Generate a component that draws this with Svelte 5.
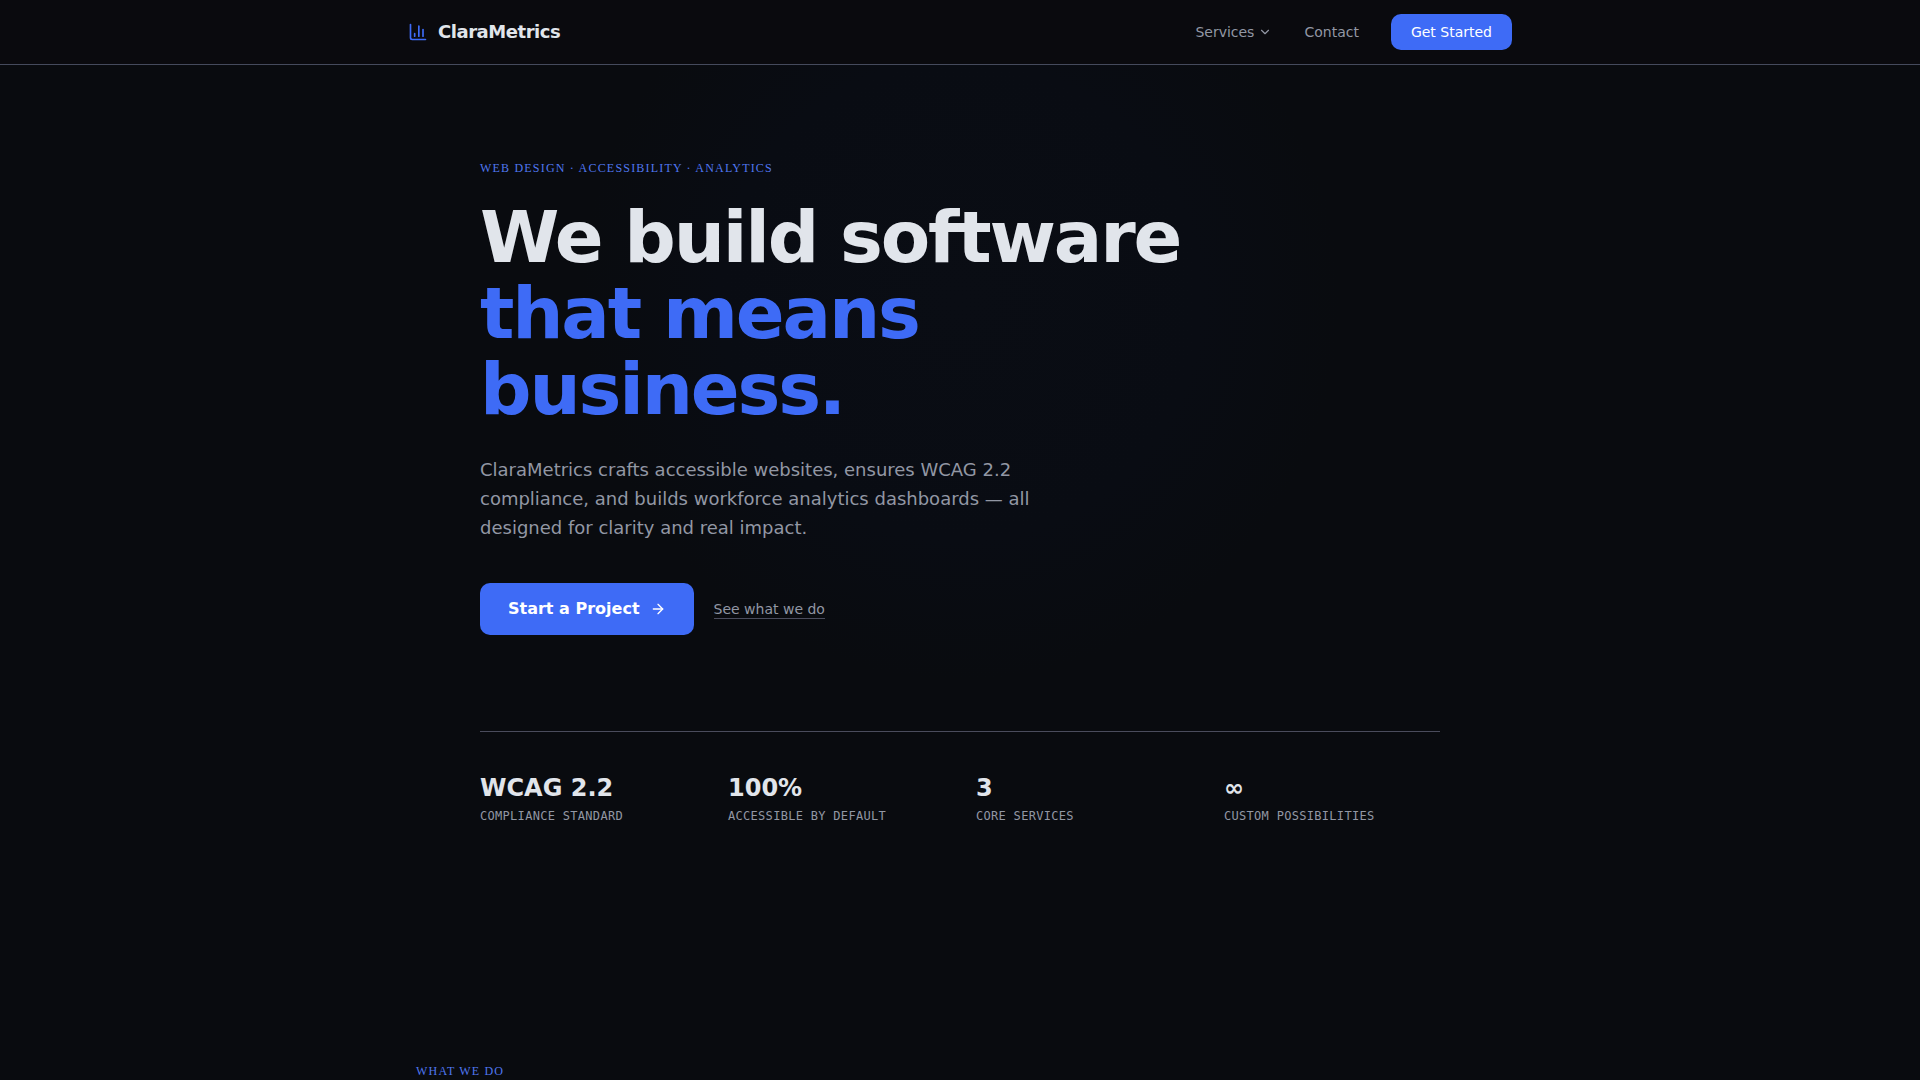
<script lang="ts">
	type Stat = {
		value: string;
		label: string;
	};

	const stats: Stat[] = [
		{ value: 'WCAG 2.2', label: 'Compliance Standard' },
		{ value: '100%', label: 'Accessible by Default' },
		{ value: '3', label: 'Core Services' },
		{ value: '∞', label: 'Custom Possibilities' }
	];
</script>

<header class="site-header">
	<div class="header-inner">
		<a href="/" class="brand">
			<svg class="brand-icon" viewBox="0 0 24 24" aria-hidden="true">
				<path d="M3 3v16a2 2 0 0 0 2 2h16" />
				<path d="M18 17V9" />
				<path d="M13 17V5" />
				<path d="M8 17v-3" />
			</svg>
			<span>ClaraMetrics</span>
		</a>
		<nav class="site-nav" aria-label="Main">
			<button type="button" class="nav-item" aria-haspopup="true">
				Services
				<svg class="chevron" viewBox="0 0 24 24" aria-hidden="true">
					<path d="m6 9 6 6 6-6" />
				</svg>
			</button>
			<a href="/contact" class="nav-item">Contact</a>
			<a href="/start" class="nav-cta">Get Started</a>
		</nav>
	</div>
</header>

<main>
	<section class="hero">
		<div class="hero-inner">
			<p class="eyebrow">Web Design · Accessibility · Analytics</p>
			<h1>
				We build software
				<span>that means business.</span>
			</h1>
			<p class="lead">
				ClaraMetrics crafts accessible websites, ensures WCAG 2.2 compliance, and builds workforce
				analytics dashboards — all designed for clarity and real impact.
			</p>
			<div class="actions">
				<a href="/start" class="primary">
					Start a Project
					<svg class="arrow" viewBox="0 0 24 24" aria-hidden="true">
						<path d="M5 12h14" />
						<path d="m12 5 7 7-7 7" />
					</svg>
				</a>
				<a href="#services" class="secondary">See what we do</a>
			</div>
			<dl class="stats">
				{#each stats as stat}
					<div class="stat">
						<dt>{stat.label}</dt>
						<dd>{stat.value}</dd>
					</div>
				{/each}
			</dl>
		</div>
	</section>

	<section class="services" id="services">
		<p class="eyebrow">What We Do</p>
	</section>
</main>

<style>
	:global(body) {
		background: #090b0f;
		color: #e1e5eb;
		font-family: 'DejaVu Sans', sans-serif;
		text-rendering: optimizeLegibility;
	}

	a {
		color: inherit;
		text-decoration: none;
	}

	svg {
		fill: none;
		stroke: currentColor;
		stroke-width: 2;
		stroke-linecap: round;
		stroke-linejoin: round;
	}

	.site-header {
		background: #0a0a0e;
		border-bottom: 1px solid #454a5c;
	}

	.header-inner {
		display: flex;
		align-items: center;
		justify-content: space-between;
		box-sizing: border-box;
		max-width: 1152px;
		height: 64px;
		margin: 0 auto;
		padding: 0 24px;
	}

	.brand {
		display: flex;
		align-items: center;
		gap: 10px;
		font-size: 18px;
		font-weight: 700;
		line-height: 28px;
		letter-spacing: -0.025em;
	}

	.brand-icon {
		width: 20px;
		height: 20px;
		color: #3e6bf6;
	}

	.site-nav {
		display: flex;
		align-items: center;
		gap: 32px;
		font-size: 14px;
		line-height: 20px;
	}

	.nav-item {
		display: flex;
		align-items: center;
		gap: 4px;
		padding: 0;
		border: 0;
		background: none;
		color: #9297a4;
		font: inherit;
		cursor: pointer;
	}

	.chevron {
		width: 14px;
		height: 14px;
	}

	.nav-cta {
		padding: 8px 20px;
		border-radius: 10px;
		background: #3e6bf6;
		color: #fff;
	}

	.hero {
		background: radial-gradient(
			circle at 50% 235px,
			#0a0d14 0,
			#090c13 240px,
			#090b0f 380px
		);
	}

	.hero-inner {
		box-sizing: border-box;
		max-width: 1024px;
		margin: 0 auto;
		padding: 96px 32px 128px;
	}

	.eyebrow {
		margin: 0;
		color: #5077f0;
		font-family: 'Liberation Serif', serif;
		font-size: 12px;
		line-height: 14px;
		letter-spacing: 0.1em;
		text-transform: uppercase;
	}

	h1 {
		max-width: 768px;
		margin: 24px 0 28px;
		font-size: 72px;
		font-weight: 700;
		line-height: 76px;
		letter-spacing: -0.03em;
	}

	h1 span {
		display: block;
		color: #3e6bf6;
	}

	.lead {
		max-width: 576px;
		margin: 0 0 41px;
		color: #9297a4;
		font-size: 18px;
		line-height: 29px;
	}

	.actions {
		display: flex;
		align-items: center;
		gap: 20px;
	}

	.primary {
		display: flex;
		align-items: center;
		gap: 10px;
		padding: 14px 28px;
		border-radius: 10px;
		background: #3e6bf6;
		color: #fff;
		font-size: 16px;
		font-weight: 700;
		line-height: 24px;
	}

	.arrow {
		width: 16px;
		height: 16px;
	}

	.secondary {
		border-bottom: 1px solid #4a4c5c;
		color: #9297a4;
		font-size: 14px;
		line-height: 18px;
	}

	.stats {
		display: grid;
		grid-template-columns: repeat(4, 1fr);
		gap: 32px;
		margin: 96px 0 0;
		padding-top: 40px;
		border-top: 1px solid #4a4c5c;
	}

	.stat {
		display: flex;
		flex-direction: column-reverse;
		gap: 4px;
	}

	dt {
		color: #9297a4;
		font-family: 'DejaVu Sans Mono', monospace;
		font-size: 12px;
		line-height: 16px;
		letter-spacing: 0.025em;
		text-transform: uppercase;
	}

	dd {
		margin: 0;
		font-size: 24px;
		font-weight: 700;
		line-height: 32px;
	}

	.services {
		box-sizing: border-box;
		max-width: 1152px;
		margin: 0 auto;
		padding: 112px 32px 0;
	}
</style>
